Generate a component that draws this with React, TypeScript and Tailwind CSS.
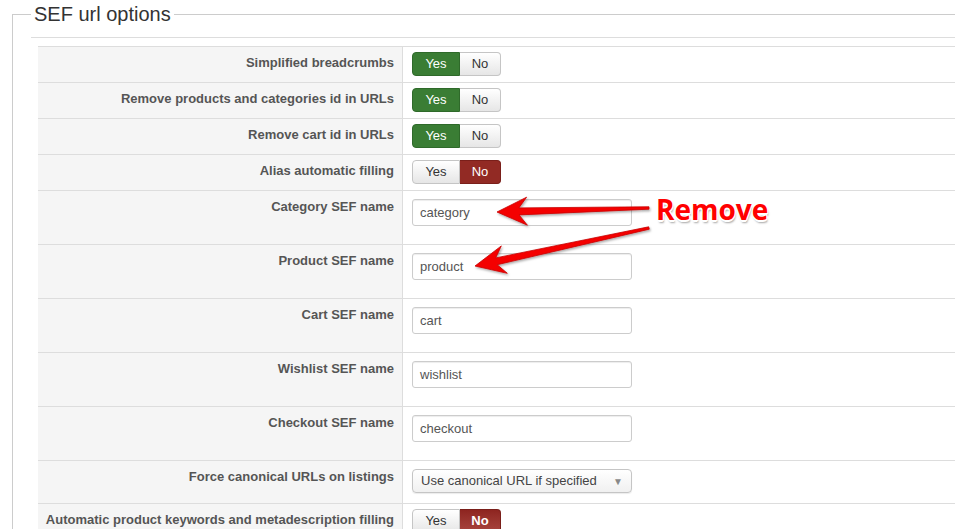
type Row =
  | { label: string; kind: 'toggle'; value: 'yes' | 'no'; strong?: boolean }
  | { label: string; kind: 'input'; value: string }
  | { label: string; kind: 'select'; value: string };

const rows: Row[] = [
  { label: 'Simplified breadcrumbs', kind: 'toggle', value: 'yes' },
  { label: 'Remove products and categories id in URLs', kind: 'toggle', value: 'yes' },
  { label: 'Remove cart id in URLs', kind: 'toggle', value: 'yes' },
  { label: 'Alias automatic filling', kind: 'toggle', value: 'no' },
  { label: 'Category SEF name', kind: 'input', value: 'category' },
  { label: 'Product SEF name', kind: 'input', value: 'product' },
  { label: 'Cart SEF name', kind: 'input', value: 'cart' },
  { label: 'Wishlist SEF name', kind: 'input', value: 'wishlist' },
  { label: 'Checkout SEF name', kind: 'input', value: 'checkout' },
  { label: 'Force canonical URLs on listings', kind: 'select', value: 'Use canonical URL if specified' },
  { label: 'Automatic product keywords and metadescription filling', kind: 'toggle', value: 'no', strong: true },
];

function Toggle({ value, strong }: { value: 'yes' | 'no'; strong?: boolean }) {
  const off = 'bg-gradient-to-b from-white to-[#e6e6e6] text-[#333] border-[#c5c5c5]';
  return (
    <div className="flex h-[24px] text-[13px] leading-[22px]">
      <span
        className={`w-[48px] text-center rounded-l-[4px] border ${
          value === 'yes' ? 'bg-[#3a7d34] text-white border-[#2f6a2a]' : off
        }`}
      >
        Yes
      </span>
      <span
        className={`w-[41px] text-center rounded-r-[4px] border border-l-0 ${
          value === 'no'
            ? `text-white border-[#7a1f1a] ${strong ? 'font-bold bg-gradient-to-b from-[#8e2520] to-[#a8443e]' : 'bg-[#922a24]'}`
            : off
        }`}
      >
        No
      </span>
    </div>
  );
}

function Field({ row }: { row: Row }) {
  if (row.kind === 'toggle') {
    return (
      <div className="pt-[5px] pb-[6px]">
        <Toggle value={row.value} strong={row.strong} />
      </div>
    );
  }
  if (row.kind === 'input') {
    return (
      <div className="pt-[8px] pb-[18px]">
        <div className="w-[220px] h-[27px] border border-[#ccc] rounded-[3px] shadow-[inset_0_1px_1px_rgba(0,0,0,0.075)] pl-[7px] text-[13px] leading-[25px] text-[#555]">
          {row.value}
        </div>
      </div>
    );
  }
  return (
    <div className="pt-[8px] pb-[10px]">
      <div className="w-[220px] h-[24px] border border-[#c5c5c5] rounded-[4px] bg-gradient-to-b from-white to-[#f0f0f0] shadow-[0_1px_1px_rgba(0,0,0,0.08)] pl-[8px] pr-[8px] flex items-center justify-between text-[13px] text-[#444]">
        <span>{row.value}</span>
        <span className="text-[10px] text-[#888]">▼</span>
      </div>
    </div>
  );
}

// tapered annotation arrow, tip at (tx,ty)
function arrowPoints(fx: number, fy: number, tx: number, ty: number) {
  const dx = tx - fx;
  const dy = ty - fy;
  const len = Math.hypot(dx, dy);
  const ux = dx / len;
  const uy = dy / len;
  const px = -uy;
  const py = ux;
  const at = (back: number, side: number) =>
    `${(tx - ux * back + px * side).toFixed(1)},${(ty - uy * back + py * side).toFixed(1)}`;
  return [
    at(0, 0),
    at(30, 14),
    at(22, 3.5),
    at(len, 1.2),
    at(len, -1.2),
    at(22, -3.5),
    at(30, -14),
  ].join(' ');
}

export default function App() {
  return (
    <div className="relative w-[955px] h-[529px] overflow-hidden bg-white font-['Liberation_Sans',Arial,sans-serif]">
      <fieldset className="ml-[12px] border-l border-t border-[#ccc] pl-[18px] min-h-[600px]">
        <legend className="px-[3px] text-[20px] leading-[28px] text-[#333]">SEF url options</legend>
        <div className="h-[10px] border-b border-[#ddd]" />
        <div className="ml-[7px] mt-[8px] grid grid-cols-[365px_1fr] border-t border-[#ddd]">
          {rows.map((row) => (
            <div key={row.label} className="contents">
              <div className="bg-[#f5f5f5] border-r border-b border-[#ddd] text-right pr-[8px] pt-[7px] text-[13px] leading-[18px] font-bold text-[#555]">
                {row.label}
              </div>
              <div className="border-b border-[#ddd] pl-[9px]">
                <Field row={row} />
              </div>
            </div>
          ))}
        </div>
      </fieldset>

      {/* annotation */}
      <svg className="absolute inset-0 pointer-events-none" width="955" height="529">
        <defs>
          <filter id="sh" x="-10%" y="-50%" width="120%" height="200%">
            <feDropShadow dx="1" dy="1.5" stdDeviation="1" floodColor="#000" floodOpacity="0.35" />
          </filter>
        </defs>
        <g filter="url(#sh)" fill="#f40000" stroke="#c80000" strokeWidth="0.8" strokeLinejoin="round">
          <polygon points={arrowPoints(649, 208, 497, 212)} />
          <polygon points={arrowPoints(649, 228, 475, 266)} />
        </g>
      </svg>
      <div className="absolute left-[656px] top-[190px] font-['Open_Sans',sans-serif] font-bold text-[28px] leading-[38px] text-[#ff0000] [text-shadow:-1px_-1px_0_#fff,1px_-1px_0_#fff,-1px_1px_0_#fff,1px_1px_0_#fff,0_2px_0_#fff,1px_3px_2px_rgba(0,0,0,0.35)]">
        Remove
      </div>
    </div>
  );
}
